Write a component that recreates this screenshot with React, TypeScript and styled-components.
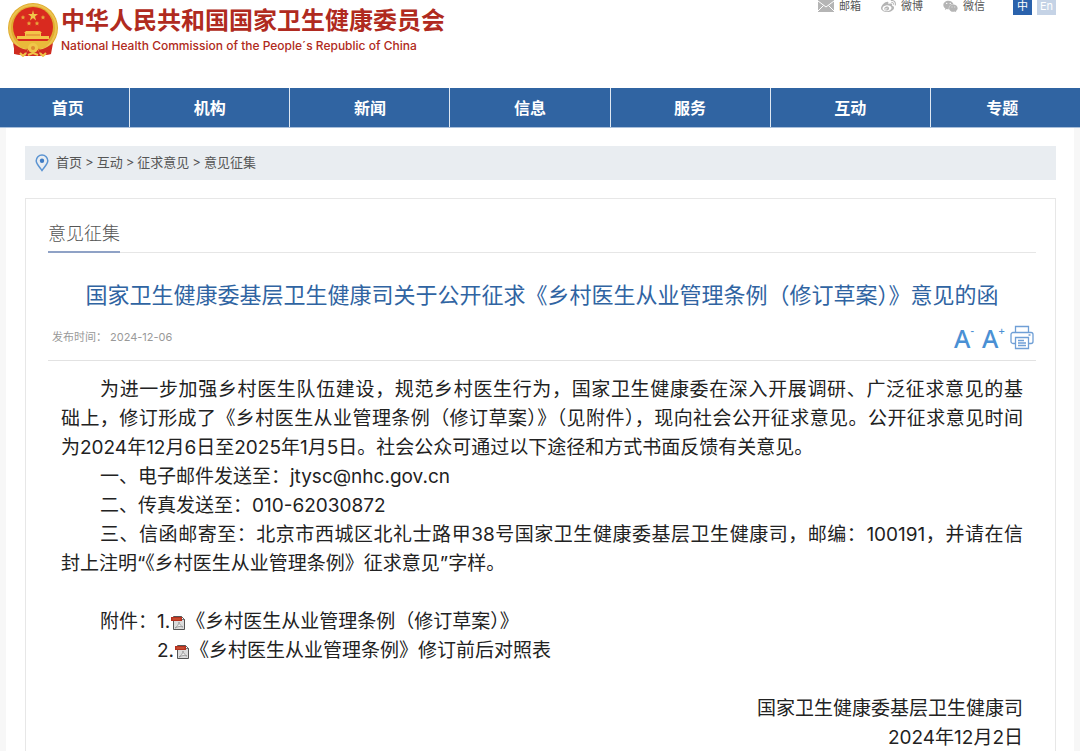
import React from 'react';
import styled, { createGlobalStyle } from 'styled-components';
import { FaWeibo, FaWeixin } from 'react-icons/fa';

const GlobalStyle = createGlobalStyle`
  * { box-sizing: border-box; }
  body {
    margin: 0;
    background: #f7f7f7;
    color: #222;
    font-family: Inter, "Noto Sans CJK SC", sans-serif;
  }
  a { color: inherit; text-decoration: none; }
  h1, h2, p { margin: 0; font-weight: 400; }
  button { padding: 0; border: 0; background: none; font-family: inherit; cursor: pointer; }
`;

const Page = styled.div`
  display: flex;
  flex-direction: column;
  min-height: 100vh;
`;

const Header = styled.header`
  display: flex;
  justify-content: space-between;
  align-items: flex-start;
  height: 88px;
  padding: 0 24px 0 7px;
  background: #fff;
`;

const Brand = styled.a`
  display: flex;
  gap: 2px;
  padding-top: 2px;
  color: #b02a20;
`;

const BrandText = styled.div`
  display: flex;
  flex-direction: column;
  padding-top: 3px;
`;

const BrandName = styled.span`
  font-size: 24px;
  font-weight: 700;
  line-height: 32px;
`;

const BrandSub = styled.span`
  font-size: 12px;
  font-weight: 500;
  line-height: 18px;
`;

const Utilities = styled.div`
  display: flex;
  color: #555;
  font-size: 11px;
  line-height: 12px;
`;

const Utility = styled.a`
  display: flex;
  align-items: center;
  gap: 5px;
  height: 12px;
  margin-right: 20px;

  svg { color: #b5b5b5; }
`;

const Languages = styled.div`
  display: flex;
  gap: 5px;
  margin-left: 8px;
`;

const Language = styled.button<{ $active?: boolean }>`
  width: 19px;
  height: 15px;
  padding-bottom: 3px;
  background: ${(p) => (p.$active ? '#2a62ac' : '#c5d3e6')};
  color: #fff;
  font-size: 11px;
  line-height: 12px;
`;

const Nav = styled.nav`
  display: flex;
  height: 40px;
  padding: 0 6px;
  background: #3064a2;
  border-bottom: 1px solid #a9bfda;
`;

const NavItem = styled.a<{ $share: number }>`
  flex: ${(p) => p.$share} 1 0;
  color: #fff;
  font-size: 16px;
  font-weight: 700;
  line-height: 40px;
  text-align: center;

  & + & { border-left: 1px solid #dfe8f2; }
`;

const Main = styled.main`
  display: flex;
  flex: 1;
  flex-direction: column;
  gap: 18px;
  margin: 0 6px;
  padding: 18px 18px 0 19px;
  background: #fff;
`;

const Breadcrumb = styled.nav`
  display: flex;
  align-items: center;
  gap: 7px;
  height: 34px;
  padding-left: 10px;
  background: #e9edf1;
  color: #555;
  font-size: 13px;
  line-height: 32px;
`;

const Crumbs = styled.div`
  display: flex;
  align-items: baseline;
  gap: 3px;
  height: 34px;
`;

const Card = styled.article`
  flex: 1;
  padding: 19px 19px 0 22px;
  border: 1px solid #e7e7e7;
  border-bottom: 0;
`;

const Section = styled.div`
  display: flex;
  border-bottom: 1px solid #e6e6e6;
`;

const SectionTitle = styled.h2`
  height: 35px;
  margin-bottom: -1px;
  border-bottom: 2px solid #8fa2c6;
  color: #555;
  font-size: 18px;
  font-weight: 300;
  line-height: 32px;
`;

const Title = styled.h1`
  padding-top: 26px;
  color: #3064a2;
  font-size: 22px;
  line-height: 32px;
  text-align: center;
`;

const Meta = styled.div`
  display: flex;
  justify-content: space-between;
  align-items: center;
  height: 50px;
  padding: 0 2px 0 4px;
  border-bottom: 1px solid #e2e2e2;
  color: #999;
  font-size: 11px;
`;

const Published = styled.span`
  display: flex;
  align-items: baseline;
  gap: 3px;
`;

const Tools = styled.div`
  display: flex;
  align-items: center;
  gap: 7px;
  padding-top: 4px;
`;

const SizeButton = styled.button`
  display: flex;
  width: 21px;
  color: #4a90d4;
  font-family: "Noto Sans", "Liberation Sans", sans-serif;
  font-size: 25px;
  font-weight: 500;
  line-height: 24px;

  sup {
    font-size: 11px;
    line-height: 10px;
  }
`;

const PrintButton = styled.button`
  display: flex;
`;

const Body = styled.div`
  padding: 14px 13px 0;
  font-size: 19px;
  line-height: 29px;
`;

const Paragraph = styled.p`
  text-indent: 39px;
`;

const Line = styled.span<{ $full?: boolean }>`
  display: block;
  text-align-last: ${(p) => (p.$full ? 'justify' : 'left')};

  & + & { text-indent: 0; }
`;

const Attachments = styled.div`
  display: flex;
  padding: 29px 0 29px 39px;
`;

const Attachment = styled.div`
  display: flex;
  align-items: center;

  svg { margin-top: 3px; }
`;

const Signature = styled.p`
  text-align: right;
`;

const Emblem = () => (
  <svg width="52" height="55" viewBox="0 0 52 55" aria-hidden="true">
    <path d="M7 40 L7 52 L16 53 L20 50 L32 50 L36 53 L44 52 L44 40Z" fill="#cf2b20" />
    <circle cx="26" cy="26" r="25" fill="#e0ac2f" />
    <circle cx="26" cy="26" r="23" fill="none" stroke="#ecc350" strokeWidth="2" />
    <circle cx="26" cy="25" r="20" fill="#d92a1f" />
    <path d="M26 8l1 4h4l-3 2.500 1 4-3-2.500-3 2.500 1-4-3-2.500h4z" fill="#f0c64a" />
    <g fill="#e8a53c">
      <path d="M16 13l.7 1.500 1.600.2-1.200 1 .3 1.700-1.400-.9-1.400.9.3-1.700-1.200-1 1.600-.2z" />
      <path d="M36 13l.7 1.500 1.600.2-1.200 1 .3 1.700-1.400-.9-1.400.9.3-1.700-1.200-1 1.600-.2z" />
      <path d="M22 19l.7 1.500 1.600.2-1.200 1 .3 1.700-1.400-.9-1.400.9.3-1.700-1.200-1 1.600-.2z" />
      <path d="M30 19l.7 1.500 1.600.2-1.200 1 .3 1.700-1.400-.9-1.400.9.3-1.700-1.200-1 1.600-.2z" />
    </g>
    <path d="M19 29h14l2 2h-1v3h8v3H10v-3h8v-3h-1z" fill="#f3c548" />
    <path d="M19 33h14" stroke="#df7a2e" strokeWidth="1" />
    <path d="M9 39h34l-5 7H14z" fill="#e9b93a" />
    <path d="M6 41 Q16 49 21 47 L18 54 L8 52Z M46 41 Q36 49 31 47 L34 54 L44 52Z" fill="#cf2b20" />
    <path d="M18 54l3-6h10l3 6z" fill="#cf2b20" />
    <circle cx="26" cy="46" r="5" fill="#f0c649" />
    <circle cx="26" cy="46" r="2" fill="#dd8a30" />
    <path d="M13 51l3 3 3-3M33 51l3 3 3-3M21 53l5-2 5 2" fill="none" stroke="#f0c649" strokeWidth="2" />
  </svg>
);

const MailIcon = () => (
  <svg width="16" height="12" viewBox="0 0 16 12" aria-hidden="true">
    <rect y="0" width="16" height="12" fill="currentColor" />
    <path d="M0 1l8 6 8-6M0 11l5.500-5.500M16 11l-5.500-5.500" fill="none" stroke="#fff" strokeWidth="1" />
  </svg>
);

const PinIcon = () => (
  <svg width="14" height="18" viewBox="0 0 14 18" fill="none" aria-hidden="true">
    <path d="M7 16.500C4 12.500 1.200 9.800 1.200 6.800a5.800 5.800 0 0 1 11.600 0c0 3-2.800 5.700-5.800 9.700z" stroke="#5b94d2" strokeWidth="1.500" />
    <circle cx="7" cy="6.800" r="2.200" fill="#3f7cc4" />
  </svg>
);

const PrinterIcon = () => (
  <svg width="24" height="25" viewBox="0 0 24 25" fill="none" stroke="#6f9fd6" strokeWidth="1.300" aria-hidden="true">
    <path d="M5.500 7V1.500h13V7" />
    <path d="M5 18.500H3a2 2 0 0 1-2-2V9.500a2 2 0 0 1 2-2h18a2 2 0 0 1 2 2v7a2 2 0 0 1-2 2h-2" />
    <path d="M5.500 12.500h13v11h-13z" />
    <path d="M8 15.500h6M8 18h8M8 20.500h8M18.500 10h2" />
  </svg>
);

const PdfIcon = () => (
  <svg width="16" height="16" viewBox="0 0 16 16" aria-hidden="true">
    <path d="M3.500 1.500h8l3 3v10h-11z" fill="#dcdcdc" stroke="#555" />
    <path d="M11.500 1.500v3h3z" fill="#fff" stroke="#555" strokeWidth=".8" />
    <path d="M1 2h11v4H1z" fill="#b5301f" />
    <path d="M2.500 4h8" stroke="#d9663f" strokeWidth="1" />
    <path d="M5 13c2-1 4-4 4-6 0 2 2 4 4 5-3-1-5-.5-8 1z" fill="#f4f4f4" stroke="#999" strokeWidth=".9" />
  </svg>
);

const navItems = [
  { label: '首页', share: 124 },
  { label: '机构', share: 160 },
  { label: '新闻', share: 160 },
  { label: '信息', share: 160 },
  { label: '服务', share: 160 },
  { label: '互动', share: 160 },
  { label: '专题', share: 144 },
];

const crumbs = ['首页', '互动', '征求意见', '意见征集'];

export default function App() {
  return (
    <Page>
      <GlobalStyle />
      <Header>
        <Brand href="#">
          <Emblem />
          <BrandText>
            <BrandName>中华人民共和国国家卫生健康委员会</BrandName>
            <BrandSub>National Health Commission of the People´s Republic of China</BrandSub>
          </BrandText>
        </Brand>
        <Utilities>
          <Utility href="#"><MailIcon />邮箱</Utility>
          <Utility href="#"><FaWeibo size={15} />微博</Utility>
          <Utility href="#"><FaWeixin size={15} />微信</Utility>
          <Languages>
            <Language type="button" $active>中</Language>
            <Language type="button">En</Language>
          </Languages>
        </Utilities>
      </Header>
      <Nav>
        {navItems.map((item) => (
          <NavItem key={item.label} href="#" $share={item.share}>{item.label}</NavItem>
        ))}
      </Nav>
      <Main>
        <Breadcrumb aria-label="当前位置">
          <PinIcon />
          <Crumbs>
            {crumbs.map((crumb, i) => (
              <React.Fragment key={crumb}>
                {i > 0 && <span>&gt;</span>}
                <a href="#">{crumb}</a>
              </React.Fragment>
            ))}
          </Crumbs>
        </Breadcrumb>
        <Card>
          <Section>
            <SectionTitle>意见征集</SectionTitle>
          </Section>
          <Title>国家卫生健康委基层卫生健康司关于公开征求《乡村医生从业管理条例（修订草案）》意见的函</Title>
          <Meta>
            <Published>
              <span>发布时间：</span>
              <time dateTime="2024-12-06">2024-12-06</time>
            </Published>
            <Tools>
              <SizeButton type="button" aria-label="缩小字号">A<sup>-</sup></SizeButton>
              <SizeButton type="button" aria-label="放大字号">A<sup>+</sup></SizeButton>
              <PrintButton type="button" aria-label="打印"><PrinterIcon /></PrintButton>
            </Tools>
          </Meta>
          <Body>
            <Paragraph>
              <Line $full>为进一步加强乡村医生队伍建设，规范乡村医生行为，国家卫生健康委在深入开展调研、广泛征求意见的基</Line>
              <Line $full>础上，修订形成了《乡村医生从业管理条例（修订草案）》（见附件），现向社会公开征求意见。公开征求意见时间</Line>
              <Line>为2024年12月6日至2025年1月5日。社会公众可通过以下途径和方式书面反馈有关意见。</Line>
            </Paragraph>
            <Paragraph>一、电子邮件发送至：jtysc@nhc.gov.cn</Paragraph>
            <Paragraph>二、传真发送至：010-62030872</Paragraph>
            <Paragraph>
              <Line $full>三、信函邮寄至：北京市西城区北礼士路甲38号国家卫生健康委基层卫生健康司，邮编：100191，并请在信</Line>
              <Line>封上注明“《乡村医生从业管理条例》征求意见”字样。</Line>
            </Paragraph>
            <Attachments>
              <span>附件：</span>
              <div>
                <Attachment>1.<PdfIcon /><a href="#">《乡村医生从业管理条例（修订草案）》</a></Attachment>
                <Attachment>2.<PdfIcon /><a href="#">《乡村医生从业管理条例》修订前后对照表</a></Attachment>
              </div>
            </Attachments>
            <Signature>国家卫生健康委基层卫生健康司</Signature>
            <Signature>2024年12月2日</Signature>
          </Body>
        </Card>
      </Main>
    </Page>
  );
}
